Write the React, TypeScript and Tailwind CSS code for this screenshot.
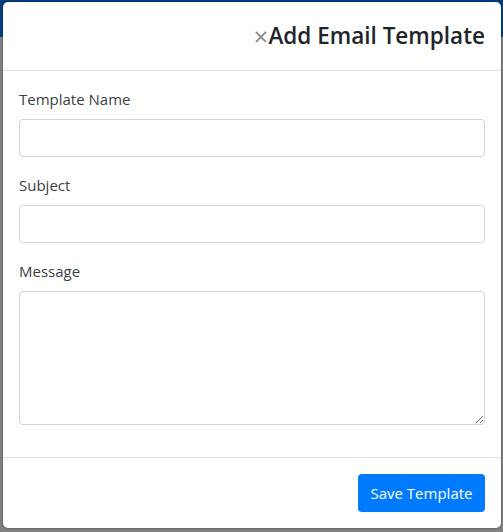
export default function App() {
  const font = { fontFamily: '"Open Sans", "Noto Sans", sans-serif' };
  return (
    <div className="relative h-[532px] w-[503px] overflow-hidden bg-[#7f7f7f]" style={font}>
      <div className="h-[37px] bg-[#043d7d]" />
      <div className="absolute left-[3px] top-[2px] w-[498px] rounded-[5px] bg-white shadow-[0_0_0_1px_rgba(0,0,0,0.15)]">
        <div className="flex items-center justify-end border-b border-[#dee2e6] px-4 py-4">
          <button className="text-[26px] leading-none text-[#8a8a8a]">×</button>
          <h4 className="text-[22.5px] font-semibold leading-[36px] text-[#212529]">Add Email Template</h4>
        </div>
        <div className="p-4">
          <Field label="Template Name" />
          <Field label="Subject" />
          <div className="mb-4">
            <label className="mb-2 block text-[15px] leading-6 text-[#3a3f44]">Message</label>
            <textarea className="block h-[134px] w-full rounded-[4px] border border-[#ced4da] px-3 py-1.5 outline-none" />
          </div>
        </div>
        <div className="flex justify-end border-t border-[#dee2e6] px-3 py-3">
          <button className="m-1 h-[38px] w-[127px] rounded-[4px] bg-[#007bff] text-[15px] leading-6 text-white">
            Save Template
          </button>
        </div>
      </div>
    </div>
  );
}

function Field({ label }: { label: string }) {
  return (
    <div className="mb-4">
      <label className="mb-2 block text-[15px] leading-6 text-[#3a3f44]">{label}</label>
      <input className="block h-[38px] w-full rounded-[4px] border border-[#ced4da] px-3 outline-none" />
    </div>
  );
}
